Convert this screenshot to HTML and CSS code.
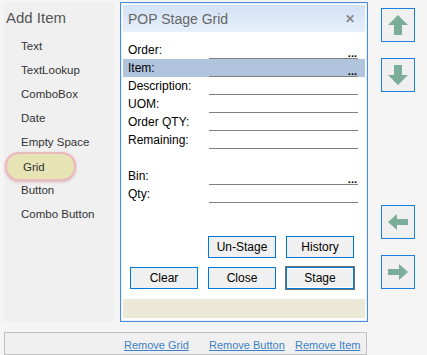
FILE: index.html
```html
<!DOCTYPE html>
<html lang="en">
<head>
    <meta charset="UTF-8">
    <title>POP Stage Grid</title>
    <link rel="stylesheet" href="styles.css">
</head>
<body>
    <div class="top">
        <!-- Lista de elementos -->
        <div class="items">
            <h3>Add Item</h3>
            <div class="item">Text</div>
            <div class="item">TextLookup</div>
            <div class="item">ComboBox</div>
            <div class="item">Date</div>
            <div class="item">Empty Space</div>
            <div class="item selected">Grid</div>
            <div class="item">Button</div>
            <div class="item">Combo Button</div>
        </div>

        <!-- Ventana del formulario -->
        <div class="dialog">
            <div class="title">
                <span>POP Stage Grid</span>
                <span class="close">&#x2715;</span>
            </div>
            <div class="fields">
                <div class="row"><span class="label">Order:</span><span class="value"><i>...</i></span></div>
                <div class="row active"><span class="label">Item:</span><span class="value"><i>...</i></span></div>
                <div class="row"><span class="label">Description:</span><span class="value"></span></div>
                <div class="row"><span class="label">UOM:</span><span class="value"></span></div>
                <div class="row"><span class="label">Order QTY:</span><span class="value"></span></div>
                <div class="row"><span class="label">Remaining:</span><span class="value"></span></div>
                <div class="row empty"></div>
                <div class="row"><span class="label">Bin:</span><span class="value"><i>...</i></span></div>
                <div class="row"><span class="label">Qty:</span><span class="value"></span></div>
            </div>
            <div class="buttons">
                <span></span>
                <button>Un-Stage</button>
                <button>History</button>
                <button>Clear</button>
                <button>Close</button>
                <button class="default">Stage</button>
            </div>
            <div class="status"></div>
        </div>

        <!-- Flechas para mover -->
        <div class="arrows">
            <div class="arrow"><svg width="24" height="24" viewBox="0 0 24 24"><path d="M12 2 L22 12 L16 12 L16 22 L8 22 L8 12 L2 12 Z" fill="#7aae9a"/></svg></div>
            <div class="arrow"><svg width="24" height="24" viewBox="0 0 24 24"><path d="M12 22 L22 12 L16 12 L16 2 L8 2 L8 12 L2 12 Z" fill="#7aae9a"/></svg></div>
            <div class="spacer"></div>
            <div class="arrow"><svg width="24" height="24" viewBox="0 0 24 24"><path d="M2 12 L11 4 L11 9 L22 9 L22 15 L11 15 L11 20 Z" fill="#7aae9a"/></svg></div>
            <div class="arrow"><svg width="24" height="24" viewBox="0 0 24 24"><path d="M22 12 L13 4 L13 9 L2 9 L2 15 L13 15 L13 20 Z" fill="#7aae9a"/></svg></div>
        </div>
    </div>

    <!-- Enlaces inferiores -->
    <div class="bottom">
        <a href="#">Remove Grid</a>
        <a href="#">Remove Button</a>
        <a href="#">Remove Item</a>
    </div>
</body>
</html>
```

FILE: styles.css
```css
* {
    box-sizing: border-box;
}

body {
    margin: 0;
    padding: 2px 4px 0 4px;
    background: #f5f5f5;
    font-family: "Liberation Sans", Arial, sans-serif;
    font-size: 12px;
    color: #000;
}

.top {
    display: flex;
    height: 320px;
}

/* Panel izquierdo */
.items {
    width: 110px;
    background: #f0f0f0;
    padding: 7px 0 0 0;
}

.items h3 {
    margin: 0 0 8px 2px;
    font-weight: normal;
    font-size: 15px;
    color: #555;
}

.item {
    height: 24px;
    line-height: 24px;
    padding-left: 17px;
    color: #333;
    font-size: 11.5px;
}

.item.selected {
    margin: -2px 0 0 1px;
    width: 71px;
    height: 29px;
    line-height: 27px;
    padding-left: 16px;
    background: #e6e3b4;
    border: 2px solid #ebb9bd;
    border-radius: 14px;
    box-shadow: 0 1px 3px rgba(200, 120, 130, 0.5);
}

.item.selected + .item {
    margin-top: -3px;
}

/* Ventana */
.dialog {
    width: 248px;
    margin-left: 6px;
    border: 1px solid #4a8fdc;
    background: #fff;
    padding: 1px 2px 2px 2px;
    display: flex;
    flex-direction: column;
    box-shadow: inset 0 0 0 1px #e6eefa;
}

.title {
    height: 28px;
    background: linear-gradient(#d3e2f5, #e7effb);
    border-top: 1px solid #fff;
    display: flex;
    justify-content: space-between;
    align-items: center;
    padding: 0 10px 0 5px;
    color: #666;
    font-size: 14px;
}

.close {
    font-size: 12px;
    font-weight: bold;
    color: #888;
}

.fields {
    margin-top: 9px;
}

.row {
    display: flex;
    height: 18px;
}

.row.active {
    background: #b0c4de;
}

.label {
    width: 86px;
    padding-left: 5px;
    line-height: 18px;
}

.value {
    width: 149px;
    border-bottom: 1px solid #808080;
    display: flex;
    justify-content: flex-end;
    align-items: flex-end;
}

.value i {
    font-style: normal;
    font-weight: bold;
    font-size: 11px;
    line-height: 10px;
    margin-right: 1px;
}

.buttons {
    display: grid;
    grid-template-columns: 68px 68px 68px;
    column-gap: 10px;
    row-gap: 9px;
    margin: 33px 0 0 7px;
}

button {
    height: 22px;
    background: #f0f0f0;
    border: 1px solid #0078d7;
    font-family: "Liberation Sans", Arial, sans-serif;
    font-size: 12px;
    padding: 0;
    color: #000;
}

button.default {
    box-shadow: 0 0 0 1px #707070;
    border: 1px solid #0078d7;
    outline: 1px solid #fff;
    outline-offset: -2px;
}

.status {
    margin-top: 10px;
    height: 19px;
    background: #ebe8d8;
}

/* Flechas */
.arrows {
    margin-left: 13px;
    padding-top: 6px;
    display: flex;
    flex-direction: column;
    gap: 16px;
}

.arrow {
    width: 34px;
    height: 34px;
    border: 1px solid #1a7fe0;
    background: #f0f0f0;
    display: flex;
    justify-content: center;
    align-items: center;
}

.spacer {
    height: 81px;
}

/* Barra inferior */
.bottom {
    width: 363px;
    height: 23px;
    margin-top: 10px;
    border: 1px solid #c0c0c0;
    background: #f0f0f0;
    display: grid;
    grid-template-columns: 85px 86px auto;
    padding: 6px 0 0 119px;
    white-space: nowrap;
}

.bottom a {
    color: #3b80c6;
    font-size: 11px;
}
```
